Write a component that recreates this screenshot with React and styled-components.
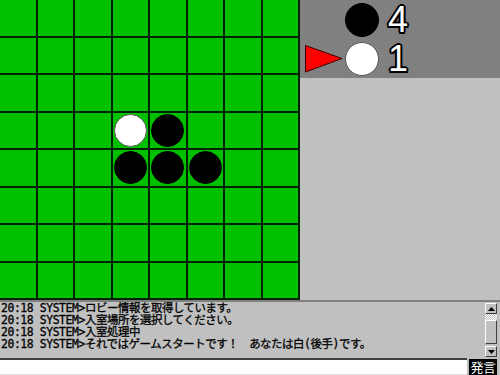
import React from 'react'
import styled, { createGlobalStyle } from 'styled-components'

const GlobalStyle = createGlobalStyle`
    html, body {
        margin: 0;
        padding: 0;
        background: #c0c0c0;
    }
`

const stones = {
    '3-3': 'w',
    '3-4': 'b',
    '4-3': 'b',
    '4-4': 'b',
    '4-5': 'b',
}

const logs = [
    '20:18 SYSTEM>ロビー情報を取得しています。',
    '20:18 SYSTEM>入室場所を選択してください。',
    '20:18 SYSTEM>入室処理中',
    '20:18 SYSTEM>それではゲームスタートです！　あなたは白(後手)です。',
]

const Triangle = () => (
    <svg width="38" height="28" viewBox="0 0 38 28">
        <polygon points="0.5,0.5 37,13.5 0.5,27" fill="#ff0000" stroke="#3a0000" strokeWidth="1" />
    </svg>
)

const App = () => {
    const cells = []
    for (let r = 0; r < 8; r++) {
        for (let c = 0; c < 8; c++) {
            const s = stones[`${r}-${c}`]
            cells.push(
                <Cell key={`${r}-${c}`}>
                    {s && <Stone $white={s === 'w'} />}
                </Cell>
            )
        }
    }

    return (
        <Screen>
            <GlobalStyle />
            <Top>
                <Board>{cells}</Board>
                <Side>
                    <ScoreBox>
                        <ScoreRow>
                            <Marker />
                            <Stone $white={false} $size={34} />
                            <Count>4</Count>
                        </ScoreRow>
                        <ScoreRow>
                            <Marker><Triangle /></Marker>
                            <Stone $white $size={34} />
                            <Count>1</Count>
                        </ScoreRow>
                    </ScoreBox>
                </Side>
            </Top>
            <Chat>
                <Log>
                    {logs.map((line, i) => (
                        <Line key={i}>{line}</Line>
                    ))}
                </Log>
                <ScrollBar>
                    <ArrowButton>
                        <svg width="7" height="4" viewBox="0 0 7 4"><polygon points="3.5,0 7,4 0,4" fill="#000" /></svg>
                    </ArrowButton>
                    <Track />
                    <Thumb />
                    <Spacer />
                    <ArrowButton>
                        <svg width="7" height="4" viewBox="0 0 7 4"><polygon points="0,0 7,0 3.5,4" fill="#000" /></svg>
                    </ArrowButton>
                </ScrollBar>
            </Chat>
            <InputRow>
                <TextInput type="text" />
                <SayButton>発言</SayButton>
            </InputRow>
        </Screen>
    )
}

const Screen = styled.div`
    width: 500px;
    height: 375px;
    overflow: hidden;
    background: #c0c0c0;
    display: flex;
    flex-direction: column;
`

const Top = styled.div`
    display: flex;
    height: 300px;
`

const Board = styled.div`
    width: 300px;
    height: 300px;
    display: grid;
    grid-template-columns: repeat(8, 37.5px);
    grid-template-rows: repeat(8, 37.5px);
    background: #00c000;
`

const Cell = styled.div`
    box-sizing: border-box;
    border-right: 2px solid #002200;
    border-bottom: 2px solid #002200;
    display: flex;
    align-items: center;
    justify-content: center;
    padding: 0;
`

const Stone = styled.div`
    box-sizing: border-box;
    width: ${p => p.$size || 33}px;
    height: ${p => p.$size || 33}px;
    border-radius: 50%;
    background: ${p => (p.$white ? '#ffffff' : '#000000')};
    border: 1px solid ${p => (p.$white ? '#555555' : '#000000')};
    flex-shrink: 0;
`

const Side = styled.div`
    width: 200px;
    height: 300px;
    background: #c0c0c0;
`

const ScoreBox = styled.div`
    height: 78px;
    background: #808080;
    display: grid;
    grid-template-rows: 39px 39px;
`

const ScoreRow = styled.div`
    display: flex;
    align-items: center;
    padding-left: 5px;
    padding-top: 1px;
`

const Marker = styled.div`
    width: 38px;
    height: 28px;
    margin-right: 2px;
    display: flex;
    align-items: center;
`

const Count = styled.div`
    margin-left: 9px;
    font-family: "Liberation Sans", Arial, sans-serif;
    font-size: 36px;
    line-height: 1;
    color: #ffffff;
    text-shadow:
        -2px 0 0 #000, 2px 0 0 #000, 0 -2px 0 #000, 0 2px 0 #000,
        -1.5px -1.5px 0 #000, 1.5px -1.5px 0 #000, -1.5px 1.5px 0 #000, 1.5px 1.5px 0 #000;
`

const Chat = styled.div`
    height: 56px;
    border-top: 2px solid #808080;
    display: flex;
`

const Log = styled.div`
    flex: 1;
    padding-left: 1px;
    overflow: hidden;
`

const Line = styled.div`
    font-family: "DejaVu Sans Mono", "Noto Sans CJK JP", monospace;
    font-size: 11.4px;
    letter-spacing: -0.4px;
    line-height: 12px;
    color: #000;
    white-space: pre;
    -webkit-text-stroke: 0.3px #000;
`

const ScrollBar = styled.div`
    width: 12px;
    margin: 1px 3px 1px 0;
    display: flex;
    flex-direction: column;
`

const ArrowButton = styled.div`
    box-sizing: border-box;
    height: 11px;
    background: #c0c0c0;
    border-top: 1px solid #ffffff;
    border-left: 1px solid #ffffff;
    border-right: 1px solid #404040;
    border-bottom: 1px solid #404040;
    display: flex;
    align-items: center;
    justify-content: center;
`

const Track = styled.div`
    height: 6px;
    background-color: #c0c0c0;
    background-image: repeating-conic-gradient(#ffffff 0 25%, #c0c0c0 0 50%);
    background-size: 2px 2px;
`

const Thumb = styled(ArrowButton)`
    height: 24px;
`

const Spacer = styled.div`
    flex: 1;
`

const InputRow = styled.div`
    height: 17px;
    display: flex;
    align-items: stretch;
    padding-right: 3px;
`

const TextInput = styled.input`
    box-sizing: border-box;
    flex: 1;
    min-width: 0;
    margin: 0 2px 0 0;
    padding: 0 2px;
    height: 17px;
    background: #ffffff;
    border: none;
    border-top: 2px solid #404040;
    border-bottom: 1px solid #e0e0e0;
    outline: none;
    font-size: 12px;
`

const SayButton = styled.div`
    width: 28px;
    background: #000000;
    color: #ffffff;
    font-family: "Noto Sans CJK JP", sans-serif;
    font-size: 13px;
    line-height: 16px;
    text-align: center;
    margin-top: 1px;
    letter-spacing: -0.5px;
`

export default App
